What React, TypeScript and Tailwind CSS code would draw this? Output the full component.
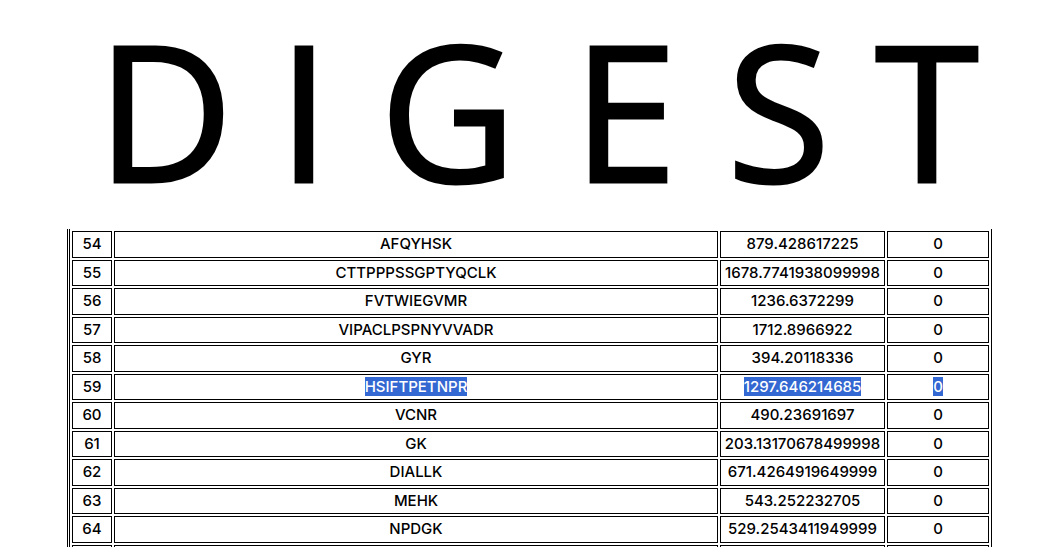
const rows: [number, string, string, string][] = [
  [54, 'AFQYHSK', '879.428617225', '0'],
  [55, 'CTTPPPSSGPTYQCLK', '1678.7741938099998', '0'],
  [56, 'FVTWIEGVMR', '1236.6372299', '0'],
  [57, 'VIPACLPSPNYVVADR', '1712.8966922', '0'],
  [58, 'GYR', '394.20118336', '0'],
  [59, 'HSIFTPETNPR', '1297.646214685', '0'],
  [60, 'VCNR', '490.23691697', '0'],
  [61, 'GK', '203.13170678499998', '0'],
  [62, 'DIALLK', '671.4264919649999', '0'],
  [63, 'MEHK', '543.252232705', '0'],
  [64, 'NPDGK', '529.2543411949999', '0'],
  [65, 'SLGK', '318.1706529', '0'],
];

const SELECTED = 59;

function Cell({ children, selected }: { children: React.ReactNode; selected?: boolean }) {
  return (
    <td className="border border-black px-0 py-0 h-[26.5px] leading-[24.5px] text-center align-middle">
      {selected ? <span className="bg-[#3367d1] text-white">{children}</span> : children}
    </td>
  );
}

export default function App() {
  return (
    <div className="h-[547px] overflow-hidden bg-white text-black">
      {/* title */}
      <div className="h-[229px] pt-[15px] font-['Open_Sans',sans-serif]">
        <div className="flex text-[188px] leading-none ml-[95px] [-webkit-text-stroke:3px_black]">
          <span className="w-[140px] text-center">D</span>
          <span className="w-[138px] text-center">I</span>
          <span className="w-[150px] text-center">G</span>
          <span className="w-[204px] text-center">E</span>
          <span className="w-[96px] text-center">S</span>
          <span className="w-[208px] text-center">T</span>
        </div>
      </div>

      <div className="ml-[67px] w-[925px] border-x border-black px-[1px]">
        <table className="w-full table-fixed border-separate border-spacing-[2px] border border-t-0 border-black font-['Inter',sans-serif] font-medium text-[15px]">
          <colgroup>
            <col className="w-[40px]" />
            <col className="w-[604px]" />
            <col className="w-[165px]" />
            <col className="w-[102px]" />
          </colgroup>
          <tbody>
            {rows.map(([id, seq, mass, count]) => {
              const sel = id === SELECTED;
              return (
                <tr key={id}>
                  <Cell>{id}</Cell>
                  <Cell selected={sel}>{seq}</Cell>
                  <Cell selected={sel}>{mass}</Cell>
                  <Cell selected={sel}>{count}</Cell>
                </tr>
              );
            })}
          </tbody>
        </table>
      </div>
    </div>
  );
}
